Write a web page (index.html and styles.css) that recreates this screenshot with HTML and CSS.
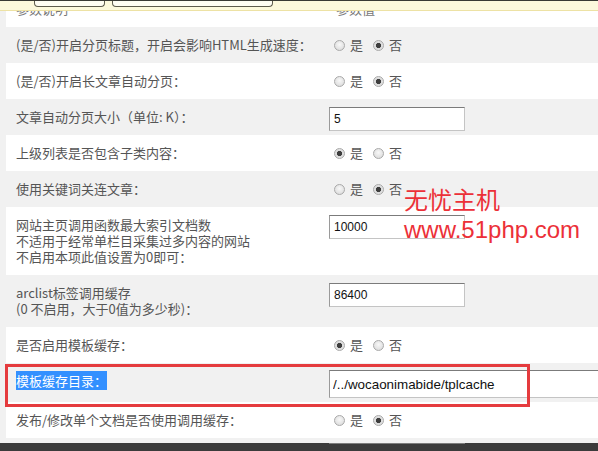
FILE: index.html
```html
<!DOCTYPE html>
<html lang="zh-CN">

<head>
    <meta charset="UTF-8">
    <meta name="viewport" content="width=device-width, initial-scale=1.0">
    <title>系统参数设置</title>
    <link rel="stylesheet" href="styles.css">
</head>

<body>
    <div class="screen">
        <div class="page">
            <div class="topbar">
                <span class="tb-field tb-short"></span>
                <span class="tb-field tb-long"></span>
            </div>

            <div class="content">
                <div class="config-table">
                    <div class="row row-head">
                        <div class="cell-label"><span class="cut">参数说明</span></div>
                        <div class="cell-value"><span class="cut cut-value">参数值</span></div>
                    </div>

                    <div class="row gray">
                        <div class="cell-label">(是/否)开启分页标题，开启会影响HTML生成速度：</div>
                        <div class="cell-value">
                            <label class="opt"><input type="radio" name="r1">是</label>
                            <label class="opt"><input type="radio" name="r1" checked>否</label>
                        </div>
                    </div>

                    <div class="row">
                        <div class="cell-label">(是/否)开启长文章自动分页：</div>
                        <div class="cell-value">
                            <label class="opt"><input type="radio" name="r2">是</label>
                            <label class="opt"><input type="radio" name="r2" checked>否</label>
                        </div>
                    </div>

                    <div class="row gray">
                        <div class="cell-label">文章自动分页大小（单位: K）：</div>
                        <div class="cell-value">
                            <input class="field" type="text" value="5">
                        </div>
                    </div>

                    <div class="row">
                        <div class="cell-label">上级列表是否包含子类内容：</div>
                        <div class="cell-value">
                            <label class="opt"><input type="radio" name="r3" checked>是</label>
                            <label class="opt"><input type="radio" name="r3">否</label>
                        </div>
                    </div>

                    <div class="row gray">
                        <div class="cell-label">使用关键词关连文章：</div>
                        <div class="cell-value">
                            <label class="opt"><input type="radio" name="r4">是</label>
                            <label class="opt"><input type="radio" name="r4" checked>否</label>
                        </div>
                    </div>

                    <div class="row">
                        <div class="cell-label">网站主页调用函数最大索引文档数<br>不适用于经常单栏目采集过多内容的网站<br>不启用本项此值设置为0即可：</div>
                        <div class="cell-value">
                            <input class="field" type="text" value="10000">
                        </div>
                    </div>

                    <div class="row gray">
                        <div class="cell-label">arclist标签调用缓存<br>(0 不启用，大于0值为多少秒)：</div>
                        <div class="cell-value">
                            <input class="field" type="text" value="86400">
                        </div>
                    </div>

                    <div class="row">
                        <div class="cell-label">是否启用模板缓存：</div>
                        <div class="cell-value">
                            <label class="opt"><input type="radio" name="r5" checked>是</label>
                            <label class="opt"><input type="radio" name="r5">否</label>
                        </div>
                    </div>

                    <div class="row gray row-marked">
                        <div class="cell-label"><span class="selected">模板缓存目录：</span></div>
                        <div class="cell-value">
                            <input class="field field-wide" type="text" value="/../wocaonimabide/tplcache">
                        </div>
                        <div class="mark-box"></div>
                    </div>

                    <div class="row">
                        <div class="cell-label">发布/修改单个文档是否使用调用缓存：</div>
                        <div class="cell-value">
                            <label class="opt"><input type="radio" name="r6">是</label>
                            <label class="opt"><input type="radio" name="r6" checked>否</label>
                        </div>
                    </div>
                </div>

                <div class="watermark">
                    <div class="wm-name">无忧主机</div>
                    <div class="wm-url">www.51php.com</div>
                </div>
            </div>
        </div>
        <div class="side-strip"></div>
    </div>
    <div class="bottombar">
        <span class="peek"></span>
    </div>
</body>

</html>
```

FILE: styles.css
```css
* {
    box-sizing: border-box;
}

html,
body {
    margin: 0;
    height: 100%;
}

body {
    display: flex;
    flex-direction: column;
    background: #f1f1f1;
    font-family: "Noto Sans CJK SC", "Open Sans", sans-serif;
    font-size: 13px;
    color: #555555;
    overflow: hidden;
}

.screen {
    display: flex;
    flex: 1;
    min-height: 0;
}

.page {
    flex: 1;
    display: flex;
    flex-direction: column;
}

.side-strip {
    width: 5px;
    background: #3b3b3b;
}

/* yellow toolbar at the top, mostly scrolled away */
.topbar {
    height: 11px;
    flex-shrink: 0;
    background: #fdf9dc;
    border-top: 1px solid #3a3a34;
    border-bottom: 1px solid #ede2a4;
    display: flex;
    gap: 7px;
    padding-left: 34px;
}

.tb-field {
    display: block;
    height: 6px;
    background: #fffdf2;
    border: 1px solid #5e5b4c;
    border-top: none;
    border-radius: 0 0 4px 4px;
}

.tb-short {
    width: 71px;
}

.tb-long {
    width: 161px;
}

.content {
    flex: 1;
    position: relative;
    padding-left: 6px;
}

.config-table {
    background: #ffffff;
}

.row {
    display: grid;
    grid-template-columns: 313px 1fr;
    position: relative;
    line-height: 16px;
}

.row.gray {
    background: #f1f1f1;
}

.cell-label {
    padding: 10px 0 10px 10px;
    white-space: nowrap;
}

.cell-value {
    padding: 8px 0 4px 10px;
    display: flex;
    align-items: flex-start;
}

.row-head {
    height: 16px;
    overflow: hidden;
}

.row-head .cell-label,
.row-head .cell-value {
    padding-top: 0;
}

.cut {
    display: block;
    margin-top: -10px;
    color: #777777;
}

.cut-value {
    padding-left: 7px;
}

.opt {
    display: flex;
    align-items: center;
    height: 20px;
    margin-left: 5px;
    margin-right: 5px;
    color: #555555;
}

.opt input {
    appearance: none;
    -webkit-appearance: none;
    width: 11px;
    height: 11px;
    margin: 0 5px 0 0;
    border: 1px solid #a9a9a9;
    border-radius: 50%;
    background: radial-gradient(circle at 50% 40%, #f8f8f8, #d6d6d6);
}

.opt input:checked {
    background: radial-gradient(circle, #3e3e3e 0 2.4px, #dcdcdc 2.9px, #e9e9e9 100%);
}

.field {
    width: 136px;
    height: 24px;
    margin: 0;
    padding: 0 4px;
    border: 1px solid #c4c4c4;
    border-top-color: #7b7b7b;
    border-left-color: #9a9a9a;
    background: #ffffff;
    font-family: "Liberation Sans", Arial, sans-serif;
    font-size: 12px;
    color: #111111;
    outline: none;
}

.field-wide {
    width: 270px;
    margin-top: -1px;
    height: 28px;
    padding-left: 3px;
    font-size: 13.4px;
}

.selected {
    background: #3390ff;
    color: #ffffff;
}

.mark-box {
    position: absolute;
    left: -1px;
    top: 1px;
    width: 525px;
    height: 43px;
    border: 3px solid #e53b3e;
}

.watermark {
    position: absolute;
    left: 404px;
    top: 174px;
    color: #ec3038;
    font-size: 24px;
    line-height: 28px;
}

.wm-url {
    margin-top: 3px;
    font-family: "Liberation Sans", Arial, sans-serif;
}

.bottombar {
    height: 8px;
    flex-shrink: 0;
    background: #3b3b3b;
    margin-top: 8px;
    position: relative;
}

.peek {
    position: absolute;
    left: 329px;
    top: 0;
    width: 136px;
    height: 1px;
    background: #7d7d7d;
}
```
